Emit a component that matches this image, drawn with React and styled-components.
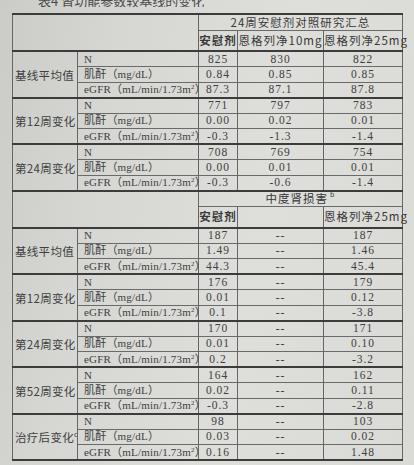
import React from 'react';
import styled, { createGlobalStyle } from 'styled-components';

const GlobalStyle = createGlobalStyle`
  html, body {
    margin: 0;
    padding: 0;
  }
  body {
    width: 414px;
    height: 465px;
    overflow: hidden;
    background: linear-gradient(100deg, #cbccc8 0%, #d6d7d3 25%, #dededa 60%, #dadad6 100%);
    font-family: "Liberation Serif", "Noto Sans CJK SC", serif;
    color: #404040;
  }
`;

const Page = styled.div`
  padding: 0 10px 0 12px;
`;

const Caption = styled.div`
  height: 7px;
  overflow: hidden;
  display: flex;
  align-items: flex-end;
  font-family: "Noto Sans CJK SC", sans-serif;
  font-size: 13px;
  line-height: 13px;
  color: #4a4a4a;
  padding-left: 26px;
  margin-bottom: 6px;
`;

const Table = styled.table`
  width: 390px;
  border-collapse: collapse;
  table-layout: fixed;
  border-top: 2px solid #3c3c3c;
  border-bottom: 2px solid #3c3c3c;
  font-size: 11px;
`;

const Row = styled.tr`
  height: ${p => p.$h || 15.5}px;
  border-top: ${p => (p.$thick ? '2px solid #3c3c3c' : '1px solid #6a6a6a')};
`;

const Cell = styled.td`
  border-left: 1px solid #666;
  border-right: 1px solid #666;
  padding: 0;
  text-align: center;
  vertical-align: middle;
  white-space: nowrap;
  line-height: 13px;
`;

const HeadCell = styled(Cell)`
  font-family: "Noto Sans CJK SC", sans-serif;
  font-size: 11.5px;
  color: #383838;
  letter-spacing: 1px;
  font-weight: ${p => (p.$bold ? 600 : 400)};
  sup {
    font-size: 7px;
    vertical-align: 6px;
    line-height: 0;
    margin-left: 2px;
  }
`;

const GroupCell = styled(Cell)`
  font-family: "Noto Sans CJK SC", sans-serif;
  font-size: 11.5px;
  letter-spacing: 0.3px;
  text-align: left;
  padding: 2px 0 0 2px;
  sup {
    font-size: 7px;
    vertical-align: 5px;
    line-height: 0;
  }
`;

const MetricCell = styled(Cell)`
  text-align: left;
  padding-left: 6px;
  font-size: 11px;
  letter-spacing: 0.2px;
  sup {
    font-size: 7px;
    vertical-align: 4px;
    line-height: 0;
  }
`;

const ValueCell = styled(Cell)`
  font-size: 11.5px;
  letter-spacing: 1px;
`;

const Sq = () => <sup>2</sup>;

const metrics = [
  'N',
  <>肌酐（mg/dL）</>,
  <>eGFR（mL/min/1.73m<Sq />）</>,
];

const pooled = [
  { label: '基线平均值', values: [['825', '830', '822'], ['0.84', '0.85', '0.85'], ['87.3', '87.1', '87.8']] },
  { label: '第12周变化', values: [['771', '797', '783'], ['0.00', '0.02', '0.01'], ['-0.3', '-1.3', '-1.4']] },
  { label: '第24周变化', values: [['708', '769', '754'], ['0.00', '0.01', '0.01'], ['-0.3', '-0.6', '-1.4']] },
];

const renal = [
  { label: '基线平均值', values: [['187', '--', '187'], ['1.49', '--', '1.46'], ['44.3', '--', '45.4']] },
  { label: '第12周变化', values: [['176', '--', '179'], ['0.01', '--', '0.12'], ['0.1', '--', '-3.8']] },
  { label: '第24周变化', values: [['170', '--', '171'], ['0.01', '--', '0.10'], ['0.2', '--', '-3.2']] },
  { label: '第52周变化', values: [['164', '--', '162'], ['0.02', '--', '0.11'], ['-0.3', '--', '-2.8']] },
  { label: <>治疗后变化<sup>c</sup></>, values: [['98', '--', '103'], ['0.03', '--', '0.02'], ['0.16', '--', '1.48']] },
];

const Group = ({ group }) => (
  <>
    {group.values.map((vals, i) => (
      <Row key={i} $thick={i === 0}>
        {i === 0 && <GroupCell rowSpan={3}>{group.label}</GroupCell>}
        <MetricCell>{metrics[i]}</MetricCell>
        {vals.map((v, j) => (
          <ValueCell key={j}>{v}</ValueCell>
        ))}
      </Row>
    ))}
  </>
);

const Header = ({ title, cols, first }) => (
  <>
    <Row $h={16} $thick={!first}>
      <Cell rowSpan={2} colSpan={2} />
      <HeadCell colSpan={3}>{title}</HeadCell>
    </Row>
    <Row $h={21}>
      {cols.map((c, i) => (
        <HeadCell key={i} $bold={i === 0}>{c}</HeadCell>
      ))}
    </Row>
  </>
);

export default function App() {
  return (
    <Page>
      <GlobalStyle />
      <Caption>表4 肾功能参数较基线的变化</Caption>
      <Table>
        <colgroup>
          <col style={{ width: 65 }} />
          <col style={{ width: 121 }} />
          <col style={{ width: 39 }} />
          <col style={{ width: 86 }} />
          <col style={{ width: 79 }} />
        </colgroup>
        <tbody>
          <Header first title="24周安慰剂对照研究汇总" cols={['安慰剂', '恩格列净10mg', '恩格列净25mg']} />
          {pooled.map((g, i) => (
            <Group key={i} group={g} />
          ))}
          <Header title={<>中度肾损害<sup>b</sup></>} cols={['安慰剂', '', '恩格列净25mg']} />
          {renal.map((g, i) => (
            <Group key={i} group={g} />
          ))}
        </tbody>
      </Table>
    </Page>
  );
}
